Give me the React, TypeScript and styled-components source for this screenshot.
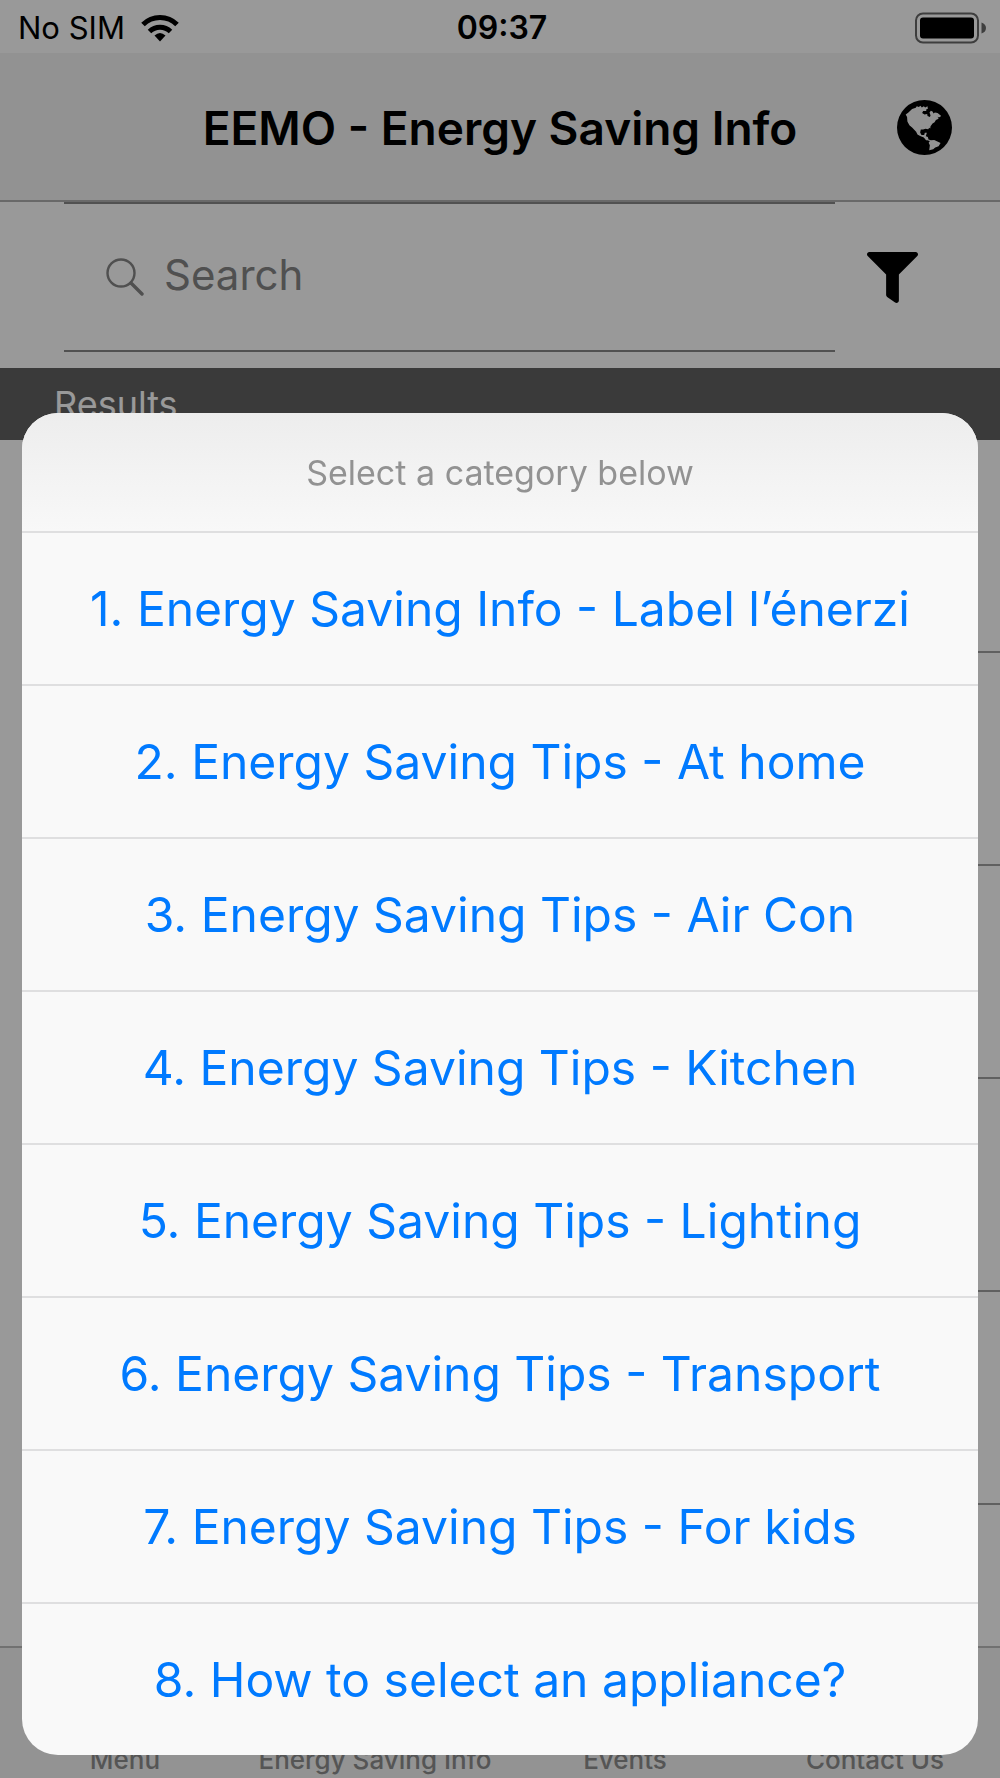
import React from 'react';
import styled, { createGlobalStyle } from 'styled-components';
import { FaFilter } from 'react-icons/fa';

const GlobalStyle = createGlobalStyle`
  *, *::before, *::after { box-sizing: border-box; }
  body {
    margin: 0;
    background: #ffffff;
    color: #000000;
    font-family: Inter, "Liberation Sans", sans-serif;
  }
  button, input { font: inherit; color: inherit; }
`;

const Page = styled.div`
  display: flex;
  flex-direction: column;
  min-height: 100vh;
`;

const StatusBar = styled.div`
  display: grid;
  grid-template-columns: 1fr auto 1fr;
  align-items: center;
  height: 53px;
  padding: 2px 14px 0 18px;
  font-size: 31px;
  line-height: 40px;
`;

const Carrier = styled.div`
  display: flex;
  align-items: center;
  gap: 16px;
`;

const Clock = styled.time`
  font-size: 32px;
  font-weight: 600;
`;

const BatterySlot = styled.div`
  display: flex;
  justify-content: flex-end;
`;

const NavBar = styled.header`
  display: grid;
  grid-template-columns: 1fr auto 1fr;
  align-items: center;
  height: 149px;
  padding: 2px 48px 0;
  background: #f3f3f3;
  border-bottom: 2px solid #b0b0b0;
`;

const Title = styled.h1`
  grid-column: 2;
  margin: 0;
  font-size: 46px;
  font-weight: 600;
  line-height: 56px;
`;

const IconButton = styled.button`
  display: flex;
  justify-self: end;
  padding: 0;
  border: 0;
  background: none;
  cursor: pointer;
`;

const SearchRow = styled.form`
  display: flex;
  align-items: center;
  gap: 32px;
  padding: 0 82px 16px 64px;
`;

const SearchField = styled.label`
  display: flex;
  flex: 1;
  align-items: center;
  gap: 20px;
  min-width: 0;
  height: 150px;
  padding: 0 42px;
  border: solid #888888;
  border-width: 2px 0;
  color: #858585;
`;

const SearchInput = styled.input`
  flex: 1;
  min-width: 0;
  padding: 0 0 4px;
  border: 0;
  outline: 0;
  background: none;
  font-size: 42px;
  line-height: 52px;

  &::placeholder {
    color: #858585;
    opacity: 1;
  }
`;

const ResultsHeading = styled.h2`
  margin: 0;
  padding: 0 54px;
  background: #626262;
  color: #ffffff;
  font-size: 36px;
  font-weight: 400;
  line-height: 72px;
`;

const ResultList = styled.ul`
  flex: 1;
  margin: 0;
  padding: 0 0 0 54px;
  list-style: none;
`;

const ResultItem = styled.li`
  height: 213px;
  border-bottom: 2px solid #a0a0a0;
`;

const TabBar = styled.nav`
  display: grid;
  grid-template-columns: repeat(4, 1fr);
  align-items: end;
  height: 132px;
  background: #f5f5f5;
  border-top: 2px solid #bcbcbc;
`;

const Tab = styled.a`
  color: #8e8e8e;
  font-size: 26px;
  font-weight: 500;
  line-height: 36px;
  text-align: center;
  text-decoration: none;
  white-space: nowrap;
`;

const Backdrop = styled.div`
  position: fixed;
  inset: 0;
  display: flex;
  align-items: flex-end;
  padding: 0 22px 23px;
  background: rgba(0, 0, 0, 0.4);
`;

const Sheet = styled.section`
  flex: 1;
  overflow: hidden;
  border-radius: 36px;
  background: #f9f9f9;
`;

const SheetTitle = styled.h2`
  margin: 0;
  padding: 38px 0 36px;
  background: linear-gradient(#ededed, #f8f8f8);
  color: #929292;
  font-size: 34px;
  font-weight: 400;
  line-height: 44px;
  text-align: center;
`;

const SheetAction = styled.button`
  display: block;
  width: 100%;
  height: 153px;
  padding: 0;
  border: 0;
  border-top: 2px solid #dfdfe0;
  background: none;
  color: #007aff;
  font-size: 48px;
  line-height: 60px;
  text-align: center;
  cursor: pointer;
`;

const WifiIcon = () => (
  <svg width="38" height="28" viewBox="0 0 38 28" aria-hidden="true">
    <g fill="none" stroke="#000" strokeWidth="5">
      <path d="M2 10.500A24 24 0 0 1 36 10.500" />
      <path d="M8.500 17.500A15 15 0 0 1 29.500 17.500" />
    </g>
    <path d="M13.500 21.500Q19 16.500 24.500 21.500L19 27.500Z" />
  </svg>
);

const BatteryIcon = () => (
  <svg width="71" height="32" viewBox="0 0 71 32" aria-hidden="true">
    <rect x="1" y="1.500" width="62" height="29" rx="7" fill="none" stroke="#686868" strokeWidth="2" />
    <rect x="5" y="5.500" width="54" height="21" rx="3" />
    <path d="M66.500 10.500Q71 12 71 16T66.500 21.500Z" fill="#686868" />
  </svg>
);

const GlobeIcon = () => (
  <svg width="55" height="55" viewBox="52 61 164 164" aria-hidden="true">
    <circle cx="134" cy="143" r="82" />
    <path
      fill="#f3f3f3"
      d="M78 104L86 98L97 88L108 84L111 80L117 82L122 78L126 83L132 80L136 83L143 80L144 87L138 90L140 94L130 94L127 100L134 104L142 103L143 109L150 112L152 107L149 98L153 93L158 95L161 101L165 98L173 100L184 109L177 113L173 111L176 117L168 121L164 127L158 131L152 139L151 146L148 144L145 148L137 147L130 149L123 149L121 158L125 165L133 165L135 159L141 159L138 169L144 171L146 179L153 181L163 180L171 184L182 189L176 199L166 203L160 208L148 211L150 196L146 188L147 184L138 180L132 173L121 168L113 164L109 156L97 143L89 136L83 125L82 112Z"
    />
    <path d="M141 181L150 183L146 189Z" />
  </svg>
);

const SearchIcon = () => (
  <svg width="38" height="38" viewBox="0 0 38 38" fill="none" stroke="#858585" aria-hidden="true">
    <circle cx="15" cy="15" r="13.500" strokeWidth="2.400" />
    <path d="M25 25L36 36" strokeWidth="3.400" strokeLinecap="round" />
  </svg>
);

const categories = [
  'Energy Saving Info - Label l’énerzi',
  'Energy Saving Tips - At home',
  'Energy Saving Tips - Air Con',
  'Energy Saving Tips - Kitchen',
  'Energy Saving Tips - Lighting',
  'Energy Saving Tips - Transport',
  'Energy Saving Tips - For kids',
  'How to select an appliance?',
];

const tabs = ['Menu', 'Energy Saving Info', 'Events', 'Contact Us'];

export default function App() {
  return (
    <>
      <GlobalStyle />
      <Page>
        <StatusBar>
          <Carrier>
            <span>No SIM</span>
            <WifiIcon />
          </Carrier>
          <Clock>09:37</Clock>
          <BatterySlot>
            <BatteryIcon />
          </BatterySlot>
        </StatusBar>
        <NavBar>
          <Title>EEMO - Energy Saving Info</Title>
          <IconButton type="button" aria-label="Language">
            <GlobeIcon />
          </IconButton>
        </NavBar>
        <SearchRow onSubmit={(event) => event.preventDefault()}>
          <SearchField>
            <SearchIcon />
            <SearchInput type="text" placeholder="Search" aria-label="Search" />
          </SearchField>
          <IconButton type="button" aria-label="Filter">
            <FaFilter size={51} />
          </IconButton>
        </SearchRow>
        <ResultsHeading>Results</ResultsHeading>
        <ResultList>
          {[1, 2, 3, 4, 5].map((id) => (
            <ResultItem key={id} />
          ))}
        </ResultList>
        <TabBar>
          {tabs.map((label) => (
            <Tab key={label} href="#">
              {label}
            </Tab>
          ))}
        </TabBar>
      </Page>
      <Backdrop>
        <Sheet role="dialog" aria-labelledby="sheet-title">
          <SheetTitle id="sheet-title">Select a category below</SheetTitle>
          {categories.map((name, index) => (
            <SheetAction key={name} type="button">
              {`${index + 1}. ${name}`}
            </SheetAction>
          ))}
        </Sheet>
      </Backdrop>
    </>
  );
}
